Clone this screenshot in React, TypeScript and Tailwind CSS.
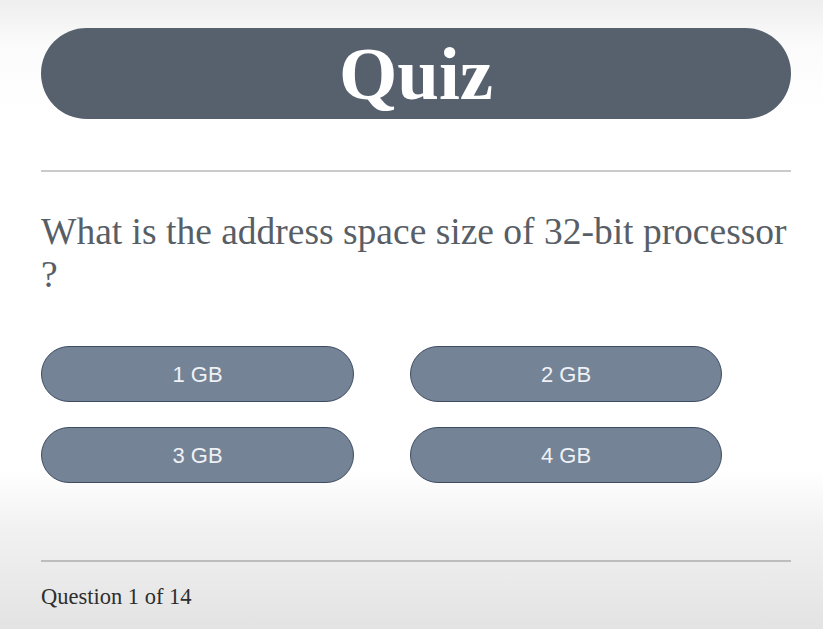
import React from "react";

export default function App() {
  const answers = ["1 GB", "2 GB", "3 GB", "4 GB"];
  return (
    <div className="min-h-[629px] w-full bg-[linear-gradient(to_bottom,#eeeeee_0px,#fbfbfb_45px,#ffffff_110px,#ffffff_470px,#f1f1f1_530px,#e3e3e3_629px)] px-[41px] pt-[28px] font-['Liberation_Serif',serif]">
      <div className="w-[750px]">
        <div className="h-[91px] rounded-full bg-[#56616d] text-center text-[75px] font-bold leading-[91px] text-white">
          Quiz
        </div>
        <div className="mt-[51px] h-[2px] bg-[#cacaca]" />
        <p className="mt-[38px] text-[37.5px] leading-[43px] text-[#585e66]">
          What is the address space size of 32-bit processor ?
        </p>
        <div className="mt-[50px] grid w-[681px] grid-cols-[313px_312px] gap-x-[56px] gap-y-[25px]">
          {answers.map((a) => (
            <button
              key={a}
              className="h-[56px] rounded-full border border-[#3e4c63] bg-[#748395] font-['Liberation_Sans',Arial,sans-serif] text-[22px] text-[#eef1f5]"
            >
              {a}
            </button>
          ))}
        </div>
        <div className="mt-[77px] h-[2px] bg-[#bdbdbd]" />
        <p className="mt-[22px] text-[22.5px] leading-[26px] text-[#2e2e2e]">
          Question 1 of 14
        </p>
      </div>
    </div>
  );
}
